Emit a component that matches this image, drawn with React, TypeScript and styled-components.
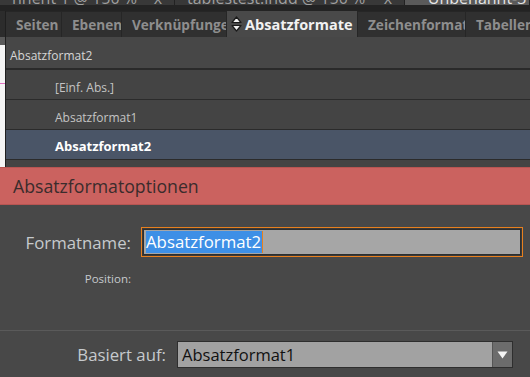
import React from 'react';
import styled, { createGlobalStyle } from 'styled-components';

const GlobalStyle = createGlobalStyle`
  html, body {
    margin: 0;
    padding: 0;
    background: #484848;
  }
  body {
    font-family: "Open Sans", "DejaVu Sans", sans-serif;
  }
`;

const Root = styled.div`
  width: 530px;
  height: 377px;
  overflow: hidden;
  display: flex;
  flex-direction: column;
  background: #484848;
`;

// document tabs strip at the very top, mostly cut off by the window edge
const DocBar = styled.div`
  height: 11px;
  flex: none;
  display: flex;
  flex-direction: column;
  background: #232323;
`;

const DocTabs = styled.div`
  height: 5px;
  display: flex;
  overflow: hidden;
`;

const DocTab = styled.div<{ $w: number; $active?: boolean }>`
  width: ${(p) => p.$w}px;
  flex: none;
  display: flex;
  justify-content: space-between;
  padding: 0 12px 0 ${(p) => (p.$active ? 14 : 12)}px;
  box-sizing: border-box;
  background: ${(p) => (p.$active ? '#5a5a5a' : '#383838')};
  border-right: 1px solid #222;
  color: ${(p) => (p.$active ? '#e6e6e6' : '#a0a0a0')};
  font-size: 16px;
  line-height: 16px;
  white-space: nowrap;
  overflow: hidden;

  span {
    margin-top: -10px;
  }
`;

const Workspace = styled.div`
  height: 156px;
  flex: none;
  display: flex;
`;

const PageEdge = styled.div`
  width: 5px;
  flex: none;
  display: flex;
  flex-direction: column;
  background: #f4f4f4;
  border-right: 1px solid #1f1f1f;
`;

const EdgeBand = styled.div<{ $h: number; $c: string }>`
  height: ${(p) => p.$h}px;
  background: ${(p) => p.$c};
  flex: none;
`;

const Panel = styled.div`
  flex: 1;
  min-width: 0;
  display: flex;
  flex-direction: column;
  background: #464646;
`;

const TabBar = styled.div`
  height: 26px;
  flex: none;
  display: flex;
  align-items: flex-end;
  background: #262626;
  overflow: hidden;
`;

const Tab = styled.div<{ $w: number; $active?: boolean }>`
  width: ${(p) => p.$w}px;
  height: ${(p) => (p.$active ? 26 : 25)}px;
  flex: none;
  box-sizing: border-box;
  display: flex;
  align-items: center;
  gap: 3px;
  padding-left: ${(p) => (p.$active ? 4 : 10)}px;
  margin-right: 1px;
  background: ${(p) => (p.$active ? '#494949' : '#303030')};
  color: ${(p) => (p.$active ? '#f2f2f2' : '#8e8e8e')};
  font-weight: 700;
  font-size: ${(p) => (p.$active ? 14.5 : 13.6)}px;
  white-space: nowrap;
  overflow: hidden;
`;

const PanelHeader = styled.div`
  height: 33px;
  flex: none;
  display: flex;
  align-items: center;
  padding: 6px 0 0 4px;
  box-sizing: border-box;
  border-bottom: 2px solid #2a2a2a;
  color: #d6d6d6;
  font-size: 12px;
  background: #474747;
`;

const StyleRow = styled.div<{ $selected?: boolean }>`
  height: 30px;
  flex: none;
  box-sizing: border-box;
  display: flex;
  align-items: center;
  padding: ${(p) => (p.$selected ? 3 : 6)}px 0 0 49px;
  border-bottom: 1px solid #2b2b2b;
  background: ${(p) => (p.$selected ? '#4a5567' : '#444444')};
  color: ${(p) => (p.$selected ? '#ffffff' : '#c4c4c4')};
  font-weight: ${(p) => (p.$selected ? 700 : 400)};
  font-size: ${(p) => (p.$selected ? 13 : 12)}px;
`;

const Banner = styled.div`
  height: 38px;
  flex: none;
  box-sizing: border-box;
  display: flex;
  align-items: center;
  padding-left: 13px;
  background: #cb625f;
  border-top: 1px solid #b85552;
  border-bottom: 1px solid #b85552;
  color: #3a2c2c;
  font-size: 17.7px;
`;

const Dialog = styled.div`
  flex: 1;
  display: flex;
  flex-direction: column;
  background: #484848;
`;

const Section = styled.div`
  height: 126px;
  flex: none;
  box-sizing: border-box;
  padding-top: 22px;
  border-bottom: 1px solid #5a5a5a;
`;

const FieldRow = styled.div`
  display: flex;
  align-items: center;
`;

const Label = styled.div<{ $w: number; $size: number }>`
  width: ${(p) => p.$w}px;
  flex: none;
  text-align: right;
  color: #c6cacd;
  font-size: ${(p) => p.$size}px;
  padding-right: ${(p) => (p.$size > 12 ? 10 : 0)}px;
  box-sizing: border-box;
`;

const NameInput = styled.div`
  width: 382px;
  height: 30px;
  flex: none;
  box-sizing: border-box;
  border: 1px solid #e8801e;
  padding: 1px;
  background: #3a3a3a;
  display: flex;
`;

const InputInner = styled.div`
  flex: 1;
  display: flex;
  align-items: center;
  padding-left: 2px;
  background: #a6a6a6;
  border: 1px solid #2e2e2e;
`;

const Selection = styled.span`
  background: #3d8fe6;
  color: #ffffff;
  font-size: 16.8px;
  line-height: 22px;
  padding-right: 1px;
  border-right: 1px solid #e8801e;
`;

const SubRow = styled.div`
  margin-top: 14px;
  display: flex;
`;

const BaseRow = styled.div`
  display: flex;
  align-items: center;
  padding-top: 10px;
`;

const Select = styled.div`
  width: 336px;
  height: 27px;
  flex: none;
  box-sizing: border-box;
  display: flex;
  border: 1px solid #2e2e2e;
  background: #a2a2a2;
  margin-left: 1px;
`;

const SelectText = styled.div`
  flex: 1;
  display: flex;
  align-items: center;
  padding-left: 4px;
  color: #111;
  font-size: 16.5px;
`;

const SelectArrow = styled.div`
  width: 19px;
  flex: none;
  display: flex;
  align-items: center;
  justify-content: center;
  background: #6c6c6c;
  border-left: 1px solid #555;
`;

const SortIcon = () => (
  <svg width="11" height="16" viewBox="0 0 11 16">
    <path d="M5.5 1 L10 6.5 L1 6.5 Z" fill="#f2f2f2" stroke="#1a1a1a" strokeWidth="1.2" strokeLinejoin="round" />
    <path d="M5.5 15 L10 9.5 L1 9.5 Z" fill="#f2f2f2" stroke="#1a1a1a" strokeWidth="1.2" strokeLinejoin="round" />
  </svg>
);

const ArrowDown = () => (
  <svg width="11" height="8" viewBox="0 0 11 8">
    <path d="M0.5 0.5 L10.5 0.5 L5.5 7.5 Z" fill="#f4f4f4" />
  </svg>
);

const App: React.FC = () => {
  return (
    <Root>
      <GlobalStyle />
      <DocBar>
        <DocTabs>
          <DocTab $w={175}>
            <span>nnent 1 @ 150 %</span>
            <span>x</span>
          </DocTab>
          <DocTab $w={230}>
            <span>tablestest.indd @ 150 %</span>
            <span>x</span>
          </DocTab>
          <DocTab $w={125} $active>
            <span>*Unbenannt-3</span>
          </DocTab>
        </DocTabs>
      </DocBar>

      <Workspace>
        <PageEdge>
          <EdgeBand $h={26} $c="#2c2c2c" />
          <EdgeBand $h={8} $c="#5a5a5a" />
          <EdgeBand $h={38} $c="#f4f4f4" />
          <EdgeBand $h={1} $c="#e070c0" />
        </PageEdge>
        <Panel>
          <TabBar>
            <Tab $w={55}>Seiten</Tab>
            <Tab $w={59}>Ebenen</Tab>
            <Tab $w={104}>Verknüpfungen</Tab>
            <Tab $w={130} $active>
              <SortIcon />
              Absatzformate
            </Tab>
            <Tab $w={107}>Zeichenformate</Tab>
            <Tab $w={80}>Tabellenformate</Tab>
          </TabBar>
          <PanelHeader>Absatzformat2</PanelHeader>
          <StyleRow>[Einf. Abs.]</StyleRow>
          <StyleRow>Absatzformat1</StyleRow>
          <StyleRow $selected>Absatzformat2</StyleRow>
          <StyleRow />
        </Panel>
      </Workspace>

      <Banner>Absatzformatoptionen</Banner>

      <Dialog>
        <Section>
          <FieldRow>
            <Label $w={141} $size={16.8}>Formatname:</Label>
            <NameInput>
              <InputInner>
                <Selection>Absatzformat2</Selection>
              </InputInner>
            </NameInput>
          </FieldRow>
          <SubRow>
            <Label $w={131} $size={11.5}>Position:</Label>
          </SubRow>
        </Section>
        <BaseRow>
          <Label $w={176} $size={16.8}>Basiert auf:</Label>
          <Select>
            <SelectText>Absatzformat1</SelectText>
            <SelectArrow>
              <ArrowDown />
            </SelectArrow>
          </Select>
        </BaseRow>
      </Dialog>
    </Root>
  );
};

export default App;
